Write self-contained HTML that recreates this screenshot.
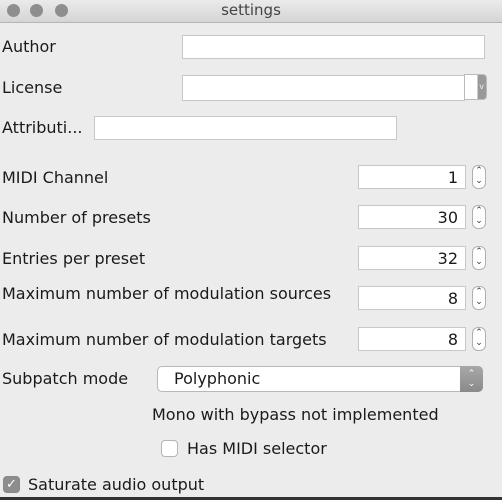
<!DOCTYPE html><html><head><style>
body{margin:0;width:502px;height:500px;background:#ececec;font-family:"DejaVu Sans",sans-serif;font-size:16px;color:#1a1a1a;position:relative;overflow:hidden}
.a{position:absolute}
.tb{left:0;top:0;width:502px;height:22px;background:linear-gradient(#ebebeb,#d5d5d5);border-bottom:1px solid #b5b5b5;text-align:center;line-height:21px;font-size:15px;color:#444}
.dot{width:13px;height:13px;border-radius:50%;background:#8e8e8e;top:4px}
.in{background:#fff;border:1px solid #c8c8c8;box-sizing:border-box}
.lb{left:2px;line-height:20px}
.sp{left:358px;width:108px;height:24px;text-align:right;padding-right:7px;line-height:23px}
.ar{left:472px;width:14px;height:24px;border:1px solid #b0b0b0;border-radius:6px;background:#fff;box-sizing:border-box;font-size:9px;line-height:10px;text-align:center;color:#333}
.cb{width:17px;height:17px;border:1px solid #b5b5b5;border-radius:4px;background:#fff;box-sizing:border-box}
</style></head><body>
<div class="a tb">settings</div>
<div class="a dot" style="left:7px"></div><div class="a dot" style="left:30px"></div><div class="a dot" style="left:55px"></div>
<div class="a lb" style="top:37px">Author</div>
<div class="a in" style="left:182px;top:35px;width:303px;height:24px"></div>
<div class="a lb" style="top:78px">License</div>
<div class="a in" style="left:182px;top:75px;width:283px;height:26px"></div>
<div class="a" style="left:464px;top:74px;width:23px;height:26px;background:linear-gradient(90deg,#fff 60%,#999 60%);border:1px solid #bbb;border-radius:0 4px 4px 0;box-sizing:border-box;color:#eee;font-size:8px;text-align:right;padding-right:2px;line-height:24px">v</div>
<div class="a lb" style="top:118px">Attributi...</div>
<div class="a in" style="left:94px;top:116px;width:303px;height:24px"></div>
<div class="a lb" style="top:168px">MIDI Channel</div>
<div class="a in sp" style="top:165px">1</div><div class="a ar" style="top:165px">⌃<br>⌄</div>
<div class="a lb" style="top:208px">Number of presets</div>
<div class="a in sp" style="top:205px">30</div><div class="a ar" style="top:205px">⌃<br>⌄</div>
<div class="a lb" style="top:249px">Entries per preset</div>
<div class="a in sp" style="top:246px">32</div><div class="a ar" style="top:246px">⌃<br>⌄</div>
<div class="a lb" style="top:284px">Maximum number of modulation sources</div>
<div class="a in sp" style="top:286px">8</div><div class="a ar" style="top:286px">⌃<br>⌄</div>
<div class="a lb" style="top:330px">Maximum number of modulation targets</div>
<div class="a in sp" style="top:327px">8</div><div class="a ar" style="top:327px">⌃<br>⌄</div>
<div class="a lb" style="top:369px">Subpatch mode</div>
<div class="a" style="left:157px;top:366px;width:326px;height:26px;background:#fff;border:1px solid #b8b8b8;border-radius:5px;box-sizing:border-box;padding-left:16px;line-height:24px">Polyphonic</div>
<div class="a" style="left:460px;top:366px;width:23px;height:26px;background:linear-gradient(#a8a8a8,#8a8a8a);border-radius:0 5px 5px 0;color:#fff;font-size:9px;line-height:10px;text-align:center;padding-top:3px;box-sizing:border-box">⌃<br>⌄</div>
<div class="a" style="left:152px;top:405px;line-height:20px">Mono with bypass not implemented</div>
<div class="a cb" style="left:161px;top:440px"></div>
<div class="a" style="left:187px;top:439px;line-height:20px">Has MIDI selector</div>
<div class="a cb" style="left:3px;top:476px;background:#8d8d8d;border-color:#888;color:#fff;font-size:13px;line-height:15px;text-align:center">✓</div>
<div class="a" style="left:28px;top:475px;line-height:20px">Saturate audio output</div>
<div class="a" style="left:0;top:497px;width:502px;height:3px;background:#333"></div>
</body></html>
